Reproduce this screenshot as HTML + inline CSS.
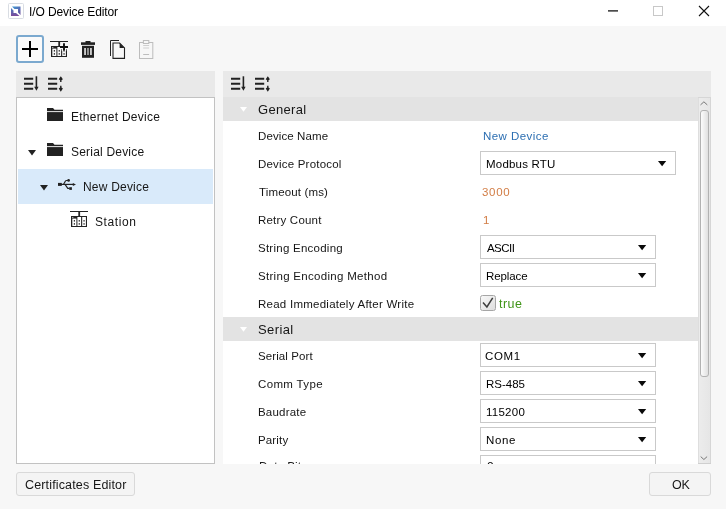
<!DOCTYPE html>
<html><head><meta charset="utf-8">
<style>
*{box-sizing:border-box;margin:0;padding:0}
html,body{width:726px;height:509px;overflow:hidden;background:#f7f7f7;font-family:"Liberation Sans",sans-serif;font-size:12px;color:#1e1e1e}
.a{position:absolute}
.t{position:absolute;white-space:nowrap;line-height:14px;height:14px;will-change:transform}
#title{left:0;top:0;width:726px;height:26px;background:#fff}
.hdr{background:#e9e9e9}
.cat{background:#e3e3e3}
.combo{position:absolute;height:24px;background:#fff;border:1px solid #c9c9c9}
.btn{position:absolute;height:24px;background:#f4f4f4;border:1px solid #d9d9d9;border-radius:3px}
svg{position:absolute;overflow:visible}
</style></head><body>
<div class="a" id="title"></div>
<!-- app icon -->
<svg style="left:8px;top:3px" width="16" height="16" viewBox="0 0 16 16">
 <rect x="0.5" y="0.5" width="15" height="15" rx="1" fill="#fff" stroke="#d9dde3"/>
 <defs><linearGradient id="g1" x1="0" y1="0" x2="1" y2="1"><stop offset="0" stop-color="#3d9bd6"/><stop offset="1" stop-color="#6a4a9a"/></linearGradient>
 <linearGradient id="g2" x1="0" y1="0" x2="0" y2="1"><stop offset="0" stop-color="#4a7fc4"/><stop offset="1" stop-color="#7a4a9a"/></linearGradient></defs>
 <path d="M4 3.5 H12.5 V12 L10 9.5 V6 H6.5 Z" fill="url(#g1)"/>
 <path d="M3 5 L5.5 7.5 V10 H8 L11.5 13 H3 Z" fill="url(#g2)"/>
</svg>
<!-- window controls -->
<svg style="left:608px;top:10px" width="10" height="2"><rect width="10" height="1.2" y="0.3" fill="#000"/></svg>
<svg style="left:653px;top:6px" width="10" height="10"><rect x="0.5" y="0.5" width="9" height="9" fill="none" stroke="#c8c8c8"/></svg>
<svg style="left:699px;top:6px" width="10" height="10"><path d="M0 0 L10 10 M10 0 L0 10" stroke="#111" stroke-width="1.1" fill="none"/></svg>

<!-- toolbar -->
<div class="a" style="left:16px;top:35px;width:28px;height:28px;border:2px solid #7ba9cf;border-radius:3px;background:#fafafa"></div>
<svg style="left:22px;top:41px" width="16" height="16"><path d="M0 8 H16 M8 0 V16" stroke="#000" stroke-width="2"/></svg>
<!-- add station -->
<svg style="left:50px;top:41px;color:#f7f7f7" width="18" height="16"><use href="#station"/>
 <path d="M10 6 H18 M14 2 V10" stroke="#f7f7f7" stroke-width="4.4"/>
 <path d="M10 6 H18 M14 2.2 V9.8" stroke="#111" stroke-width="1.9"/></svg>
<!-- trash -->
<svg style="left:81px;top:41px" width="14" height="17" viewBox="0 0 14 17">
 <rect x="4.5" y="0" width="5" height="2" fill="#222"/>
 <rect x="0" y="1.3" width="14" height="2.6" fill="#222"/>
 <rect x="1" y="4.8" width="12" height="12" fill="#222"/>
 <rect x="3.3" y="7" width="1.5" height="7" fill="#f7f7f7"/><rect x="6.25" y="7" width="1.5" height="7" fill="#b5b5b5"/><rect x="9.2" y="7" width="1.5" height="7" fill="#f7f7f7"/>
</svg>
<!-- copy -->
<svg style="left:110px;top:40px" width="16" height="19" viewBox="0 0 16 19">
 <path d="M0.5 16 V0.5 H9" fill="none" stroke="#222"/>
 <path d="M3 3 H9.6 L14.5 7.9 V18.4 H3 Z" fill="none" stroke="#222" stroke-width="1.1"/>
 <path d="M9.6 3 L14.5 7.9 H9.6 Z" fill="#222"/>
</svg>
<!-- paste -->
<svg style="left:139px;top:40px" width="15" height="19" viewBox="0 0 15 19">
 <rect x="0.5" y="2.5" width="13.3" height="16" fill="none" stroke="#bdbdbd"/>
 <rect x="4.4" y="0.5" width="5.4" height="3" fill="#f7f7f7" stroke="#bdbdbd"/>
 <path d="M4.2 5.5 H10.1 M4.2 8 H10.1" stroke="#cfcfcf"/><path d="M4.2 14.5 H10.1" stroke="#bdbdbd"/>
</svg>

<!-- left panel -->
<div class="a hdr" style="left:16px;top:71px;width:199px;height:26px"></div>
<div class="a" style="left:16px;top:97px;width:199px;height:367px;background:#fff;border:1px solid #c2c2c2"></div>
<div class="a" style="left:18px;top:169px;width:195px;height:35px;background:#d9eafa"></div>

<!-- right panel -->
<div class="a hdr" style="left:223px;top:71px;width:488px;height:26px"></div>
<div class="a" style="left:223px;top:97px;width:488px;height:366.5px;background:#fff"></div>
<div class="a cat" style="left:223px;top:97px;width:475px;height:24px"></div>
<div class="a cat" style="left:223px;top:317px;width:475px;height:24px"></div>
<!-- scrollbar -->
<div class="a" style="left:698px;top:97px;width:13px;height:366.5px;background:linear-gradient(to right,#dedede 0,#dedede 1px,#ececec 1px,#e6e6e6 12px,#d6d6d6 12px)"></div>
<div class="a" style="left:700px;top:110px;width:9px;height:267px;background:linear-gradient(to right,#fcfcfc,#e0e0e0);border:1px solid #b2b2b2;border-radius:3px"></div>
<svg style="left:700px;top:101px" width="8" height="5"><path d="M0.5 3.9 L3.9 0.8 L7.3 3.9" fill="none" stroke="#777" stroke-width="1"/></svg>
<svg style="left:700px;top:455.5px" width="8" height="5"><path d="M0.7 0.6 L3.9 3.5 L7.1 0.6" fill="none" stroke="#777" stroke-width="1"/></svg>

<div class="a" style="left:698px;top:462.5px;width:13px;height:1px;background:#cfcfcf"></div>
<div class="a" style="left:698px;top:97px;width:13px;height:1px;background:#d6d6d6"></div>
<!-- sort icons -->
<svg style="left:23.6px;top:76.4px" width="16" height="16"><use href="#sortA"/></svg>
<svg style="left:48.4px;top:76.3px" width="16" height="16"><use href="#sortB"/></svg>
<svg style="left:230.5px;top:76.4px" width="16" height="16"><use href="#sortA"/></svg>
<svg style="left:255.3px;top:76.3px" width="16" height="16"><use href="#sortB"/></svg>
<svg width="0" height="0"><defs>
 <g id="sortA"><path d="M0 2.8 H9.2 M0 7.8 H9.2 M0 12.8 H9.2" stroke="#222" stroke-width="1.9"/><path d="M12.4 0.3 V12" stroke="#222" stroke-width="1.6"/><path d="M10.2 10.8 H14.6 L12.4 14.7 Z" fill="#222"/></g>
 <g id="sortB"><path d="M0 2.8 H9.2 M0 7.8 H9.2 M0 12.8 H9.2" stroke="#222" stroke-width="1.9"/><path d="M12.8 0.2 L14.9 3.3 L13.5 4.3 V6.1 H12.1 V4.3 L10.7 3.3 Z M12.8 15.7 L14.9 12.6 L13.5 11.6 V9.8 H12.1 V11.6 L10.7 12.6 Z" fill="#222"/></g>
 <g id="station"><rect x="0" y="0" width="18" height="1" fill="#222"/><rect x="8.3" y="0.5" width="1.8" height="5" fill="#222"/>
 <rect x="1" y="5" width="16" height="11" fill="#222"/>
 <rect x="2.3" y="7.6" width="4.1" height="7.4" fill="currentColor"/><rect x="7.4" y="6" width="3.7" height="9" fill="currentColor"/><rect x="12.2" y="6" width="3.7" height="9" fill="currentColor"/>
 <rect x="2.3" y="6" width="1" height="1" fill="#ddd"/>
 <rect x="3.8" y="9" width="1.1" height="1.6" fill="#222"/><rect x="3.8" y="12.1" width="1.1" height="1.6" fill="#222"/>
 <rect x="8.7" y="9" width="1.1" height="1.6" fill="#222"/><rect x="8.7" y="12.1" width="1.1" height="1.6" fill="#222"/>
 <rect x="13.5" y="9" width="1.1" height="1.6" fill="#222"/><rect x="13.5" y="12.1" width="1.1" height="1.6" fill="#222"/></g>
 <g id="folder"><path d="M0 0 H6 L7.5 1.8 H16 V13 H0 Z" fill="#222"/><path d="M0 3.6 H16" stroke="#fff" stroke-width="0.9"/></g>
 <g id="dd"><path d="M0 0 H8.2 L4.1 5.2 Z" fill="#0a0a0a"/></g>
 <g id="tri"><path d="M0 0 H8 L4 5.6 Z" fill="#222"/></g>
</defs></svg>

<!-- tree -->
<svg style="left:47px;top:108px" width="16" height="13"><use href="#folder"/></svg>
<svg style="left:28px;top:150px" width="8" height="5"><use href="#tri"/></svg>
<svg style="left:47px;top:143px" width="16" height="13"><use href="#folder"/></svg>
<svg style="left:40px;top:185px" width="8" height="5"><use href="#tri"/></svg>
<!-- usb -->
<svg style="left:58px;top:178px" width="18" height="12" viewBox="0 0 18 12">
 <rect x="0" y="4.9" width="3.8" height="3" fill="#222"/>
 <path d="M3 6.4 H15.5" stroke="#222" stroke-width="1.2" fill="none"/>
 <path d="M14.8 4.9 L18 6.4 L14.8 7.9Z" fill="#222"/>
 <path d="M5 6.4 C6.6 6.4 6.6 2.5 8.4 2.5 H10" stroke="#222" stroke-width="1.2" fill="none"/>
 <circle cx="10.6" cy="2.4" r="1.35" fill="#222"/>
 <path d="M7 6.4 L9.8 10.4 H11.6" stroke="#222" stroke-width="1.2" fill="none"/>
 <rect x="11.3" y="9.2" width="2.6" height="2.7" fill="#222"/>
</svg>
<!-- station icon -->
<svg style="left:70px;top:211px;color:#fff" width="18" height="16"><use href="#station"/></svg>

<!-- categories -->
<svg style="left:239.6px;top:107.2px" width="7" height="5"><path d="M0 0 H7 L3.5 4.8Z" fill="#fff"/></svg>
<svg style="left:239.6px;top:327.2px" width="7" height="5"><path d="M0 0 H7 L3.5 4.8Z" fill="#fff"/></svg>

<!-- labels -->

<!-- values -->
<div class="combo" style="left:480px;top:151px;width:196px"></div>
<svg style="left:658px;top:161px" width="9" height="5"><use href="#dd"/></svg>

<div class="combo" style="left:480px;top:235px;width:176px"></div>
<svg style="left:638px;top:245px" width="9" height="5"><use href="#dd"/></svg>
<div class="combo" style="left:480px;top:263px;width:176px"></div>
<svg style="left:638px;top:273px" width="9" height="5"><use href="#dd"/></svg>
<!-- checkbox -->
<div class="a" style="left:480px;top:295px;width:16px;height:15.5px;border:1px solid #a6a6a6;border-radius:2.5px;background:linear-gradient(135deg,#f8f8f8,#dedede)"></div>
<svg style="left:480px;top:295px" width="16" height="16"><path d="M3 7.6 L6.9 12 L12.7 2.8" fill="none" stroke="#3c3c3c" stroke-width="1.5"/></svg>

<div class="combo" style="left:480px;top:343px;width:176px"></div>
<svg style="left:638px;top:353px" width="9" height="5"><use href="#dd"/></svg>
<div class="combo" style="left:480px;top:371px;width:176px"></div>
<svg style="left:638px;top:381px" width="9" height="5"><use href="#dd"/></svg>
<div class="combo" style="left:480px;top:399px;width:176px"></div>
<svg style="left:638px;top:409px" width="9" height="5"><use href="#dd"/></svg>
<div class="combo" style="left:480px;top:427px;width:176px"></div>
<svg style="left:638px;top:437px" width="9" height="5"><use href="#dd"/></svg>
<!-- clipped row -->
<div class="a" style="left:223px;top:455px;width:475px;height:8.5px;overflow:hidden">
 <div class="combo" style="left:257px;top:0px;width:176px"></div>
 <div class="t" style="left:35.5px;top:5px;letter-spacing:-0.1px">Data Bit</div>
 <div class="t" style="left:264px;top:5px;color:#000">8</div>
</div>

<!-- bottom buttons -->
<div class="btn" style="left:16px;top:472px;width:119px"></div>
<div class="btn" style="left:649px;top:472px;width:62px"></div>
<div class="t" style="left:29.0px;top:5.0px;color:#000;letter-spacing:-0.1px">I/O Device Editor</div>
<div class="t" style="left:70.5px;top:109.5px;color:#161616;letter-spacing:0.25px">Ethernet Device</div>
<div class="t" style="left:70.5px;top:144.5px;color:#161616;letter-spacing:0.2px">Serial Device</div>
<div class="t" style="left:83.0px;top:179.5px;color:#161616;letter-spacing:0.2px">New Device</div>
<div class="t" style="left:94.5px;top:214.5px;color:#161616;letter-spacing:0.6px">Station</div>
<div class="t" style="left:257.5px;top:102.5px;color:#161616;font-size:13px;letter-spacing:0.3px">General</div>
<div class="t" style="left:257.5px;top:322.5px;color:#161616;font-size:13px;letter-spacing:0.4px">Serial</div>
<div class="t" style="left:257.5px;top:128.5px;color:#161616;font-size:11.5px;letter-spacing:0.1px">Device Name</div>
<div class="t" style="left:257.5px;top:156.5px;color:#161616;font-size:11.5px;letter-spacing:0.2px">Device Protocol</div>
<div class="t" style="left:258.5px;top:184.5px;color:#161616;font-size:11.5px;letter-spacing:0.15px">Timeout (ms)</div>
<div class="t" style="left:257.5px;top:212.5px;color:#161616;font-size:11.5px;letter-spacing:0.2px">Retry Count</div>
<div class="t" style="left:258.0px;top:240.5px;color:#161616;font-size:11.5px;letter-spacing:0.25px">String Encoding</div>
<div class="t" style="left:258.0px;top:268.5px;color:#161616;font-size:11.5px;letter-spacing:0.3px">String Encoding Method</div>
<div class="t" style="left:257.5px;top:296.5px;color:#161616;font-size:11.5px;letter-spacing:0.25px">Read Immediately After Write</div>
<div class="t" style="left:257.5px;top:348.5px;color:#161616;font-size:11.5px;letter-spacing:0.1px">Serial Port</div>
<div class="t" style="left:258.0px;top:376.5px;color:#161616;font-size:11.5px;letter-spacing:0.35px">Comm Type</div>
<div class="t" style="left:257.5px;top:404.5px;color:#161616;font-size:11.5px;letter-spacing:0.2px">Baudrate</div>
<div class="t" style="left:257.5px;top:432.5px;color:#161616;font-size:11.5px;letter-spacing:0.15px">Parity</div>
<div class="t" style="left:482.5px;top:128.5px;color:#2d6fb2;font-size:11.5px;letter-spacing:0.45px">New Device</div>
<div class="t" style="left:485.5px;top:156.5px;color:#000;font-size:11.5px;letter-spacing:0.2px">Modbus RTU</div>
<div class="t" style="left:482.0px;top:184.5px;color:#d27d45;font-size:11.5px;letter-spacing:0.7px">3000</div>
<div class="t" style="left:482.5px;top:212.5px;color:#d27d45;font-size:11.5px">1</div>
<div class="t" style="left:486.5px;top:240.5px;color:#000;font-size:11.5px;letter-spacing:-0.55px">ASCII</div>
<div class="t" style="left:485.5px;top:268.5px;color:#000;font-size:11.5px;letter-spacing:-0.1px">Replace</div>
<div class="t" style="left:499.0px;top:296.5px;color:#3f9418;font-size:12.5px;letter-spacing:0.45px">true</div>
<div class="t" style="left:485.0px;top:348.5px;color:#000;font-size:11.5px;letter-spacing:0.65px">COM1</div>
<div class="t" style="left:485.5px;top:376.5px;color:#000;font-size:11.5px">RS-485</div>
<div class="t" style="left:486.0px;top:404.5px;color:#000;font-size:11.5px;letter-spacing:0.25px">115200</div>
<div class="t" style="left:486.0px;top:432.5px;color:#000;font-size:11.5px;letter-spacing:0.65px">None</div>
<div class="t" style="left:24.5px;top:478.0px;color:#161616;font-size:12.5px;letter-spacing:0.15px">Certificates Editor</div>
<div class="t" style="left:671.5px;top:478.0px;color:#161616;font-size:12.5px;letter-spacing:-0.2px">OK</div>
</body></html>
